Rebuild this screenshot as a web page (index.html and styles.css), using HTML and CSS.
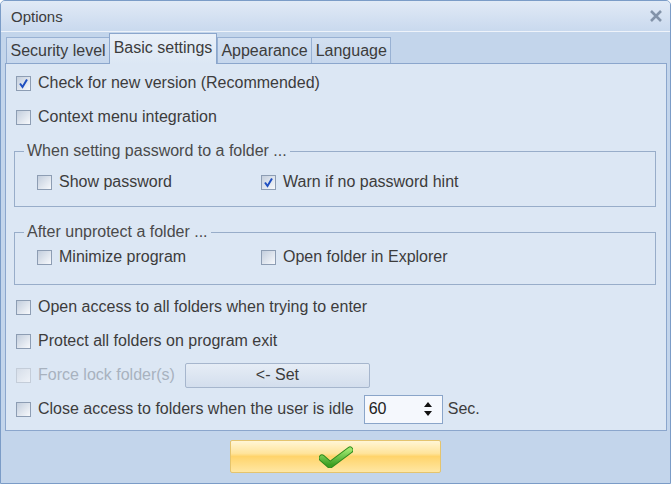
FILE: index.html
```html
<!DOCTYPE html>
<html lang="en">
<head>
  <meta charset="UTF-8">
  <title>Options</title>
  <link rel="stylesheet" href="styles.css">
</head>
<body>
  <div class="window">
    <div class="titlebar">
      <span class="title">Options</span>
      <svg class="close" width="14" height="12" viewBox="0 0 14 12">
        <path d="M2 1 L12 11 M12 1 L2 11" stroke="#8393a9" stroke-width="2.6" fill="none"/>
      </svg>
    </div>

    <div class="tabs">
      <div class="tab">Security level</div>
      <div class="tab active">Basic settings</div>
      <div class="tab">Appearance</div>
      <div class="tab">Language</div>
    </div>

    <div class="panel">
      <label class="row">
        <span class="check"><svg viewBox="0 0 13 13"><path d="M3 6.5 L5.5 10 L10 2.5" stroke="#1f4fc0" stroke-width="2" fill="none"/></svg></span>
        Check for new version (Recommended)
      </label>
      <label class="row"><span class="check"></span>Context menu integration</label>

      <fieldset class="group first">
        <legend>When setting password to a folder ...</legend>
        <div class="cols">
          <label class="row col"><span class="check"></span>Show password</label>
          <label class="row col">
            <span class="check"><svg viewBox="0 0 13 13"><path d="M3 6.5 L5.5 10 L10 2.5" stroke="#1f4fc0" stroke-width="2" fill="none"/></svg></span>
            Warn if no password hint
          </label>
        </div>
      </fieldset>

      <fieldset class="group second">
        <legend>After unprotect a folder ...</legend>
        <div class="cols">
          <label class="row col"><span class="check"></span>Minimize program</label>
          <label class="row col"><span class="check"></span>Open folder in Explorer</label>
        </div>
      </fieldset>

      <div class="after">
        <label class="row"><span class="check"></span>Open access to all folders when trying to enter</label>
        <label class="row"><span class="check"></span>Protect all folders on program exit</label>
        <div class="row disabled">
          <span class="check"></span>Force lock folder(s)
          <button class="set">&lt;- Set</button>
        </div>
        <div class="row">
          <span class="check"></span>Close access to folders when the user is idle
          <div class="spin">
            <span>60</span>
            <svg width="10" height="18" viewBox="0 0 10 18">
              <path d="M1 7 L5 2 L9 7 Z M1 11 L5 16 L9 11 Z" fill="#111"/>
            </svg>
          </div>
          <span class="unit">Sec.</span>
        </div>
      </div>
    </div>

    <div class="footer">
      <button class="ok">
        <svg width="34" height="22" viewBox="0 0 34 22">
          <defs>
            <linearGradient id="g" x1="0" y1="0" x2="0" y2="1">
              <stop offset="0" stop-color="#9be56c"/>
              <stop offset="1" stop-color="#3c9e22"/>
            </linearGradient>
          </defs>
          <path d="M3 12 L11 19 L31 4" stroke="#2f8a1c" stroke-width="7" stroke-linecap="round" stroke-linejoin="round" fill="none"/>
          <path d="M3 12 L11 19 L31 4" stroke="url(#g)" stroke-width="5" stroke-linecap="round" stroke-linejoin="round" fill="none"/>
        </svg>
      </button>
    </div>
  </div>
</body>
</html>
```

FILE: styles.css
```css
body {
  margin: 0;
  font-family: "Liberation Sans", Arial, sans-serif;
  color: #3c3c3c;
}

/* Window frame */
.window {
  width: 671px;
  height: 484px;
  box-sizing: border-box;
  border: 1px solid #7b9cc7;
  border-radius: 5px 5px 0 0;
  background: #c3d5eb;
  overflow: hidden;
}

.titlebar {
  height: 30px;
  display: flex;
  align-items: center;
  justify-content: space-between;
  padding: 0 7px 0 10px;
  background: linear-gradient(#e1eaf6, #c9d9ee);
  border-bottom: 1px solid #eef3fa;
}
.title {
  font-size: 15px;
  color: #3c3c3c;
}

/* Tabs */
.tabs {
  height: 31px;
  display: flex;
  align-items: flex-end;
  padding-left: 5px;
}
.tab {
  height: 25px;
  padding: 0 3.5px;
  font-size: 16px;
  line-height: 26px;
  border: 1px solid #98b1d3;
  border-bottom: none;
  background: linear-gradient(#d3e0f1, #c6d7ed);
  margin-right: -1px;
}
.tab.active {
  height: 30px;
  line-height: 28px;
  background: linear-gradient(#e9f0f9, #dce7f4);
  border-color: #8ba6cc;
  position: relative;
  z-index: 1;
  margin-bottom: -1px;
  margin-right: 0;
}

/* Page body */
.panel {
  height: 368px;
  box-sizing: border-box;
  margin: 0 3px 0 4px;
  padding: 2px 8px 0 10px;
  border: 1px solid #8ba6cc;
  background: #dce7f4;
}
.row {
  height: 34px;
  display: flex;
  align-items: center;
  font-size: 16px;
  white-space: nowrap;
}
.check {
  width: 13px;
  height: 13px;
  flex: none;
  margin-right: 7px;
  border: 1px solid #8d9db3;
  background: linear-gradient(135deg, #c3cedd, #f7f9fc);
  display: flex;
}
.check svg {
  width: 13px;
  height: 13px;
}
.disabled {
  color: #a8b2bf;
}
.disabled .check {
  border-color: #c4cdd9;
  background: linear-gradient(135deg, #d6dee9, #eef2f8);
}

/* Group boxes */
.group {
  margin: 0 0 0 -2px;
  padding: 0 0 0 22px;
  border: 1px solid #98adc9;
  width: 642px;
  box-sizing: border-box;
  font-size: 16px;
}
.group legend {
  line-height: 18px;
  padding: 0 3px;
  margin-left: -13px;
  color: #4a4a4a;
}
.group.first {
  margin-top: 8px;
  padding-top: 5px;
  padding-bottom: 7px;
}
.group.second {
  margin-top: 16px;
  padding-top: 0;
  padding-bottom: 11px;
}
.group.second .row {
  height: 32px;
}
.cols {
  display: flex;
}
.col {
  width: 224px;
}

.after {
  margin-top: 5px;
}

.set {
  margin-left: 10px;
  width: 185px;
  height: 25px;
  font: 16px "Liberation Sans", Arial, sans-serif;
  color: #3c3c3c;
  border: 1px solid #a6b6cd;
  border-radius: 2px;
  background: linear-gradient(#e6edf6, #d3deed);
}

.spin {
  margin-left: 10px;
  width: 79px;
  height: 29px;
  box-sizing: border-box;
  border: 1px solid #8aa5c9;
  background: #f5f8fd;
  display: flex;
  align-items: center;
  justify-content: space-between;
  padding: 0 9px 0 4px;
  color: #222;
}
.unit {
  margin-left: 5px;
}

/* Bottom */
.footer {
  display: flex;
  justify-content: center;
  padding-top: 9px;
}
.ok {
  width: 211px;
  height: 33px;
  border: 1px solid #e4c46e;
  border-radius: 2px;
  background: linear-gradient(#fff6d6 0%, #ffe49b 40%, #ffd46b 50%, #ffe7a3 100%);
  display: flex;
  align-items: center;
  justify-content: center;
  padding: 0;
}
```
